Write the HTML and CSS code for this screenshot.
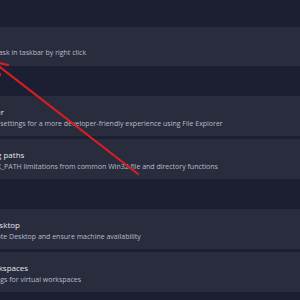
FILE: index.html
```html
<!DOCTYPE html>
<html>
<head>
<meta charset="utf-8">
<link rel="stylesheet" href="styles.css">
</head>
<body>
<div class="page">
  <div class="group">
    <div class="card card-first">
      <div class="text">
        <div class="title">End task</div>
        <div class="sub">Enable end task in taskbar by right click</div>
      </div>
    </div>
  </div>
  <div class="group">
    <div class="card">
      <div class="text">
        <div class="title">File Explorer</div>
        <div class="sub">Adjust these settings for a more developer-friendly experience using File Explorer</div>
      </div>
    </div>
    <div class="card">
      <div class="text">
        <div class="title">Enable long paths</div>
        <div class="sub">Remove MAX_PATH limitations from common Win32 file and directory functions</div>
      </div>
    </div>
  </div>
  <div class="group">
    <div class="card">
      <div class="text">
        <div class="title">Remote Desktop</div>
        <div class="sub">Enable Remote Desktop and ensure machine availability</div>
      </div>
    </div>
    <div class="card">
      <div class="text">
        <div class="title">Virtual workspaces</div>
        <div class="sub">Enable settings for virtual workspaces</div>
      </div>
    </div>
  </div>
</div>
<svg class="arrow" width="300" height="300" viewBox="0 0 300 300">
  <line x1="-4" y1="64" x2="138" y2="174" stroke="#d81e22" stroke-width="2.2" stroke-linecap="round"/>
  <polyline points="8,65 -5,62 0,75" fill="none" stroke="#d81e22" stroke-width="2.2" stroke-linejoin="round" stroke-linecap="round"/>
</svg>
</body>
</html>
```
FILE: styles.css
```css
html, body {
  margin: 0;
  padding: 0;
  background: #1c1f31;
}
body {
  width: 300px;
  height: 300px;
  overflow: hidden;
  position: relative;
  font-family: "Open Sans", "Noto Sans", sans-serif;
}
.page {
  padding-top: 27px;
  display: flex;
  flex-direction: column;
  gap: 30px;
}
.group {
  display: flex;
  flex-direction: column;
  gap: 3px;
}
.card {
  height: 40px;
  background: #282c3d;
  overflow: hidden;
}
.card-first {
  height: 39px;
}
.text {
  margin-left: -42px;
  padding-top: 10px;
  white-space: nowrap;
}
.card-first .text {
  padding-top: 8px;
}
.title {
  font-size: 8px;
  line-height: 12px;
  color: #e4e6ee;
}
.sub {
  font-size: 7px;
  line-height: 11px;
  color: #b9bcc8;
}
.arrow {
  position: absolute;
  left: 0;
  top: 0;
}
```
